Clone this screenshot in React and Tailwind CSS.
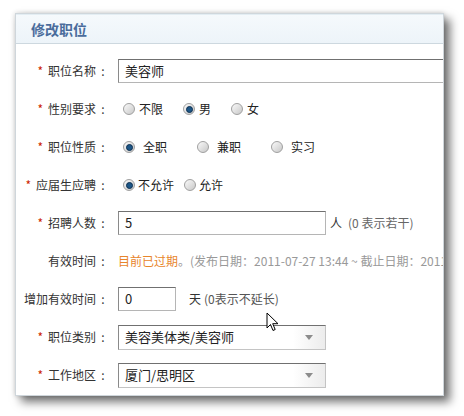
import React from 'react';

const Star = () => <span className="text-[#cc2200] mr-[5px]">*</span>;

const Label = ({ star, children }) => (
  <div className="w-[94px] shrink-0 flex justify-end items-center whitespace-nowrap text-[#333]">
    {star && <Star />}
    <span>{children}</span>
    <span className="inline-block w-[14px] text-center">:</span>
  </div>
);

const Radio = ({ checked }) => (
  <span className="w-[12px] h-[12px] shrink-0 rounded-full border border-[#a0a0a0] bg-gradient-to-br from-[#fafafa] to-[#c8c8c8] flex items-center justify-center">
    {checked && <span className="w-[7px] h-[7px] rounded-full bg-[#1d5687] border border-[#0d2f50]" />}
  </span>
);

const Option = ({ checked, children, gap = 'gap-[4px]' }) => (
  <span className={`flex items-center ${gap}`}>
    <Radio checked={checked} />
    <span>{children}</span>
  </span>
);

const Row = ({ children }) => <div className="h-[38px] flex items-center">{children}</div>;

const inputCls =
  'h-[24px] border border-[#b5b5b5] border-t-[#707070] border-l-[#8a8a8a] bg-white px-[6px] flex items-center text-[#222] text-[13px]';

const Select = ({ value }) => (
  <div className="ml-[8px] w-[208px] h-[25px] border border-[#c4c4c4] border-t-[#707070] border-l-[#8a8a8a] bg-white flex items-center">
    <span className="flex-1 pl-[6px] text-[13px] text-[#222]">{value}</span>
    <span className="w-[32px] h-full bg-gradient-to-r from-white to-[#ececec] flex items-center justify-center">
      <svg width="8" height="5" viewBox="0 0 8 5">
        <path d="M0 0h8L4 5z" fill="#8c8c8c" />
      </svg>
    </span>
  </div>
);

export default function App() {
  return (
    <div lang="zh-CN" className="w-[464px] h-[416px] bg-white relative font-['Noto_Sans_CJK_SC',sans-serif] text-[12px] pt-[13px] pl-[15px]">
      <div className="w-[429px] h-[383px] bg-white border border-[#cfd6db] overflow-hidden shadow-[6px_6px_9px_rgba(0,0,0,0.55),0_0_5px_rgba(0,0,0,0.18)]">
        <div className="h-[30px] border-t border-[#e3edf3] border-b border-b-[#cdd8df] bg-gradient-to-b from-[#f5f9fc] to-[#edf4f9] flex items-center pl-[15px]">
          <span className="text-[14px] font-bold text-[#4a6c9c]">修改职位</span>
        </div>
        <div className="pt-[8px]">
          <Row>
            <Label star>职位名称</Label>
            <div className={`ml-[8px] w-[340px] shrink-0 ${inputCls}`}>美容师</div>
          </Row>
          <Row>
            <Label star>性别要求</Label>
            <div className="ml-[13px] flex items-center gap-[20px] text-[#222]">
              <Option>不限</Option>
              <Option checked>男</Option>
              <Option>女</Option>
            </div>
          </Row>
          <Row>
            <Label star>职位性质</Label>
            <div className="ml-[13px] flex items-center gap-[30px] text-[#222]">
              <Option checked gap="gap-[8px]">全职</Option>
              <Option gap="gap-[8px]">兼职</Option>
              <Option gap="gap-[8px]">实习</Option>
            </div>
          </Row>
          <Row>
            <Label star>应届生应聘</Label>
            <div className="ml-[13px] flex items-center gap-[10px] text-[#222]">
              <Option checked gap="gap-[3px]">不允许</Option>
              <Option gap="gap-[3px]">允许</Option>
            </div>
          </Row>
          <Row>
            <Label star>招聘人数</Label>
            <div className={`ml-[8px] w-[208px] shrink-0 ${inputCls}`}>5</div>
            <span className="ml-[4px] text-[#333]">人</span>
            <span className="ml-[6px] text-[#666]">(0 表示若干)</span>
          </Row>
          <Row>
            <Label>有效时间</Label>
            <div className="ml-[8px] whitespace-nowrap">
              <span className="text-[#e8852b]">目前已过期</span>
              <span className="text-[#999]">。(发布日期：2011-07-27 13:44 ~ 截止日期：2011-08-27 13:44)</span>
            </div>
          </Row>
          <Row>
            <Label>增加有效时间</Label>
            <div className={`ml-[8px] w-[58px] shrink-0 ${inputCls}`}>0</div>
            <span className="ml-[13px] text-[#333]">天</span>
            <span className="ml-[3px] text-[#555]">(0表示不延长)</span>
          </Row>
          <Row>
            <Label star>职位类别</Label>
            <Select value="美容美体类/美容师" />
          </Row>
          <Row>
            <Label star>工作地区</Label>
            <Select value="厦门/思明区" />
          </Row>
        </div>
      </div>
      <svg className="absolute left-[266px] top-[312px]" width="14" height="20" viewBox="0 0 14 20">
        <path d="M1 1v15l3.5-3.5 2.5 6 2.2-1-2.5-5.8H12z" fill="#fff" stroke="#000" strokeWidth="1" strokeLinejoin="round" />
      </svg>
    </div>
  );
}
